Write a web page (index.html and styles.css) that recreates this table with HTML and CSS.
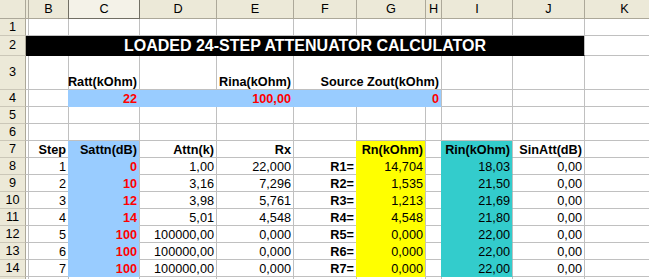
FILE: index.html
```html
<!DOCTYPE html>
<html>
<head>
<meta charset="utf-8">
<link rel="stylesheet" href="styles.css">
</head>
<body>
<div class="sheet">
  <!-- header row -->
  <div class="hd corner"></div>
  <div class="hd colA"></div>
  <div class="hd">B</div>
  <div class="hd sel">C</div>
  <div class="hd">D</div>
  <div class="hd">E</div>
  <div class="hd">F</div>
  <div class="hd">G</div>
  <div class="hd">H</div>
  <div class="hd">I</div>
  <div class="hd">J</div>
  <div class="hd">K</div>

  <!-- row 1 -->
  <div class="hd rh">1</div>
  <div class="c"></div><div class="c"></div><div class="c"></div><div class="c"></div><div class="c"></div><div class="c"></div><div class="c"></div><div class="c"></div><div class="c"></div><div class="c"></div><div class="c"></div>

  <!-- row 2 -->
  <div class="hd rh">2</div>
  <div class="c title">LOADED 24-STEP ATTENUATOR CALCULATOR</div>
  <div class="c"></div>

  <!-- row 3 -->
  <div class="hd rh">3</div>
  <div class="c"></div><div class="c"></div>
  <div class="c b">Ratt(kOhm)</div>
  <div class="c"></div>
  <div class="c b">Rina(kOhm)</div>
  <div class="c b span3">Source Zout(kOhm)</div>
  <div class="c"></div><div class="c"></div><div class="c"></div>

  <!-- row 4 -->
  <div class="hd rh">4</div>
  <div class="c"></div><div class="c"></div>
  <div class="c blue b red">22</div>
  <div class="c blue"></div>
  <div class="c blue b red">100,00</div>
  <div class="c blue"></div>
  <div class="c blue"></div>
  <div class="c blue b red">0</div>
  <div class="c"></div><div class="c"></div><div class="c"></div>

  <!-- row 5 -->
  <div class="hd rh">5</div>
  <div class="c"></div><div class="c"></div><div class="c"></div><div class="c"></div><div class="c"></div><div class="c"></div><div class="c"></div><div class="c"></div><div class="c"></div><div class="c"></div><div class="c"></div>

  <!-- row 6 -->
  <div class="hd rh">6</div>
  <div class="c"></div><div class="c"></div><div class="c"></div><div class="c"></div><div class="c"></div><div class="c"></div><div class="c"></div><div class="c"></div><div class="c"></div><div class="c"></div><div class="c"></div>

  <!-- row 7 -->
  <div class="hd rh">7</div>
  <div class="c"></div>
  <div class="c b">Step</div>
  <div class="c blue b">Sattn(dB)</div>
  <div class="c b">Attn(k)</div>
  <div class="c b">Rx</div>
  <div class="c"></div>
  <div class="c yellow b">Rn(kOhm)</div>
  <div class="c"></div>
  <div class="c teal b">Rin(kOhm)</div>
  <div class="c b">SinAtt(dB)</div>
  <div class="c"></div>

  <!-- row 8 -->
  <div class="hd rh">8</div>
  <div class="c"></div><div class="c">1</div><div class="c blue b red">0</div><div class="c">1,00</div><div class="c">22,000</div><div class="c b">R1=</div><div class="c yellow">14,704</div><div class="c"></div><div class="c teal">18,03</div><div class="c">0,00</div><div class="c"></div>

  <!-- row 9 -->
  <div class="hd rh">9</div>
  <div class="c"></div><div class="c">2</div><div class="c blue b red">10</div><div class="c">3,16</div><div class="c">7,296</div><div class="c b">R2=</div><div class="c yellow">1,535</div><div class="c"></div><div class="c teal">21,50</div><div class="c">0,00</div><div class="c"></div>

  <!-- row 10 -->
  <div class="hd rh">10</div>
  <div class="c"></div><div class="c">3</div><div class="c blue b red">12</div><div class="c">3,98</div><div class="c">5,761</div><div class="c b">R3=</div><div class="c yellow">1,213</div><div class="c"></div><div class="c teal">21,69</div><div class="c">0,00</div><div class="c"></div>

  <!-- row 11 -->
  <div class="hd rh">11</div>
  <div class="c"></div><div class="c">4</div><div class="c blue b red">14</div><div class="c">5,01</div><div class="c">4,548</div><div class="c b">R4=</div><div class="c yellow">4,548</div><div class="c"></div><div class="c teal">21,80</div><div class="c">0,00</div><div class="c"></div>

  <!-- row 12 -->
  <div class="hd rh">12</div>
  <div class="c"></div><div class="c">5</div><div class="c blue b red">100</div><div class="c">100000,00</div><div class="c">0,000</div><div class="c b">R5=</div><div class="c yellow">0,000</div><div class="c"></div><div class="c teal">22,00</div><div class="c">0,00</div><div class="c"></div>

  <!-- row 13 -->
  <div class="hd rh">13</div>
  <div class="c"></div><div class="c">6</div><div class="c blue b red">100</div><div class="c">100000,00</div><div class="c">0,000</div><div class="c b">R6=</div><div class="c yellow">0,000</div><div class="c"></div><div class="c teal">22,00</div><div class="c">0,00</div><div class="c"></div>

  <!-- row 14 -->
  <div class="hd rh">14</div>
  <div class="c"></div><div class="c">7</div><div class="c blue b red">100</div><div class="c">100000,00</div><div class="c">0,000</div><div class="c b">R7=</div><div class="c yellow">0,000</div><div class="c"></div><div class="c teal">22,00</div><div class="c">0,00</div><div class="c"></div>

  <!-- row 15 (only its top edge is in view) -->
  <div class="hd rh"></div>
  <div class="c"></div><div class="c"></div><div class="c"></div><div class="c"></div><div class="c"></div><div class="c"></div><div class="c"></div><div class="c"></div><div class="c"></div><div class="c"></div><div class="c"></div>
</div>
</body>
</html>
```

FILE: styles.css
```css
* {
  box-sizing: border-box;
}

html, body {
  margin: 0;
  padding: 0;
  background: #ffffff;
  overflow: hidden;
}

.sheet {
  display: grid;
  grid-template-columns: 26px 3px 40px 71px 77px 77px 63px 69px 16px 71px 72px 80px;
  grid-template-rows: 19px 17px 20px 34px 17px 17px 17px 17px 17px 17px 17px 17px 17px 17px 17px 17px;
  width: 663px;
  font-family: "Liberation Sans", Arial, sans-serif;
  font-size: 12.7px;
  color: #000000;
}

.hd {
  background: #ece9d8;
  border-right: 1px solid #aca899;
  border-bottom: 1px solid #aca899;
  display: flex;
  align-items: center;
  justify-content: center;
  font-size: 12.7px;
  line-height: 1;
  white-space: nowrap;
  overflow: hidden;
}

.corner {
  border-bottom-color: #aca899;
}

.hd.sel {
  background: #f4f2e8;
  border-right-color: #716f64;
  border-bottom-color: #716f64;
  box-shadow: -1px 0 0 #716f64;
}

.rh {
  border-right-color: #aca899;
  border-bottom-color: #cbc7b8;
}

.c {
  border-right: 1px solid #c0c0c0;
  border-bottom: 1px solid #c0c0c0;
  display: flex;
  align-items: flex-end;
  justify-content: flex-end;
  padding-right: 2px;
  white-space: nowrap;
  line-height: normal;
  min-width: 0;
}

.b {
  font-weight: bold;
}

.red {
  color: #ff0000;
}

.blue {
  background: #99ccff;
  border-bottom-color: #99ccff;
  box-shadow: -1px 0 0 #99ccff;
}

.yellow {
  background: #ffff00;
  border-bottom-color: #ffff00;
  box-shadow: -1px 0 0 #ffff00;
}

.teal {
  background: #33cccc;
  border-bottom-color: #33cccc;
  box-shadow: -1px 0 0 #33cccc;
}

.title {
  grid-column: span 10;
  background: #000000;
  border-bottom-color: #000000;
  color: #ffffff;
  font-weight: bold;
  font-size: 16px;
  justify-content: center;
  padding-right: 0;
}

.span3 {
  grid-column: span 3;
}
```
